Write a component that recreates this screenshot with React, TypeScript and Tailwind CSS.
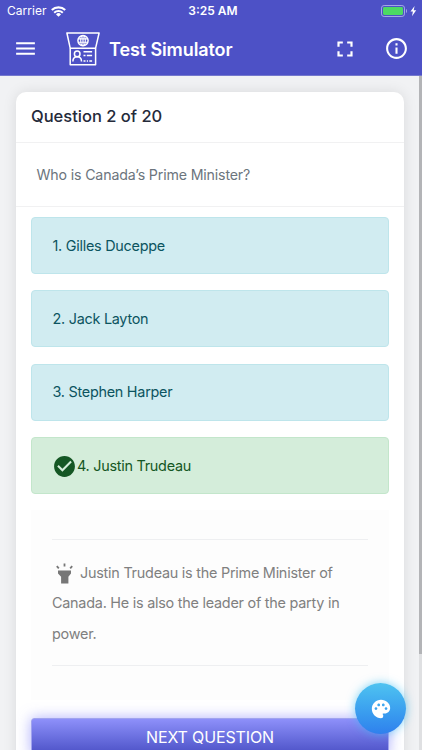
import React from "react"
import clsx from "clsx"
import {
  MdCheckCircle,
  MdFullscreen,
  MdInfoOutline,
  MdMenu,
  MdPalette,
} from "react-icons/md"

interface Answer {
  id: number
  name: string
  correct?: boolean
}

const answers: Answer[] = [
  { id: 1, name: "Gilles Duceppe" },
  { id: 2, name: "Jack Layton" },
  { id: 3, name: "Stephen Harper" },
  { id: 4, name: "Justin Trudeau", correct: true },
]

const WifiIcon = () => (
  <svg className="ml-1 h-[11px] w-[15px]" viewBox="0 0 15 11" fill="none">
    <path d="M.8 4.1a9.5 9.5 0 0 1 13.4 0" stroke="white" strokeWidth="2.1" />
    <path d="M3.2 6.7a6.1 6.1 0 0 1 8.6 0" stroke="white" strokeWidth="2" />
    <path d="M7.5 10.8 5 8.4a3.5 3.5 0 0 1 5 0z" fill="white" />
  </svg>
)

const BatteryIcon = () => (
  <svg className="h-3 w-[37px]" viewBox="0 0 37 12" fill="none">
    <rect x="0.5" y="0.5" width="23" height="11" rx="2.6" stroke="#a3a7e6" />
    <rect x="2" y="2" width="20" height="8" rx="1.4" fill="#4cd964" />
    <path d="M25 4c1.3.4 1.3 3.6 0 4z" fill="#a3a7e6" />
    <path d="M33.6 1 29.5 6.6h2.4l-.9 4.6 4.2-6h-2.5z" fill="white" />
  </svg>
)

const Logo = () => (
  <svg
    className="h-[34px] w-[34px]"
    viewBox="0 0 34 34"
    fill="none"
    stroke="white"
    strokeWidth="1.5"
  >
    <path d="M.9 1h32.2l-3.5 15.2H4.2z" strokeLinejoin="round" />
    <path d="M4.2 16.2v16.6h25.4V16.2" strokeLinejoin="round" />
    <circle cx="17" cy="8.6" r="5.1" />
    <ellipse cx="17" cy="8.6" rx="2.3" ry="5.1" strokeWidth="1.1" />
    <path d="M12.4 6.9h9.2M12.4 10.3h9.2M17 3.5v10.2" strokeWidth="1.1" />
    <circle cx="11.2" cy="21.9" r="2.8" />
    <path d="M6.9 29.6c0-3.2 1.2-4.8 4.3-4.8s4.3 1.6 4.3 4.8" />
    <path d="M17.5 19.8h8.6M17.5 23.4h2M20.8 23.4h5.3M17.5 29h2M20.8 29h1.2M23.3 29h2.8" />
  </svg>
)

const FlashlightIcon = () => (
  <svg
    className="mr-[7px] ml-1 inline-block h-[21px] w-[17px] align-[-6px]"
    viewBox="0 0 17 21"
    fill="#777"
  >
    <path d="M2 7.5h13v3l-2.6 3.2V20.5H5.1v-6.8L2 10.5z" />
    <path
      d="M8.5.5v3M.8 3.2l2 2.2M16.2 3.2l-2 2.2"
      stroke="#777"
      strokeWidth="1.8"
    />
  </svg>
)

const Header = () => (
  <header className="h-[76px] shrink-0 border-b border-[#7478cd] bg-[#4d51c6] text-white">
    <div className="grid h-[22px] grid-cols-3 items-center pr-1 pl-[7px] text-[12px]">
      <div className="flex items-center">
        <span className="tracking-[0.05px]">Carrier</span>
        <WifiIcon />
      </div>
      <span className="pl-px text-center font-semibold">3:25 AM</span>
      <div className="flex justify-end">
        <BatteryIcon />
      </div>
    </div>
    <div className="flex h-[53px] items-center pr-[13px] pl-[13px]">
      <MdMenu className="size-[25px]" />
      <div className="ml-7">
        <Logo />
      </div>
      <h1 className="mt-0.5 ml-[9px] text-[18px] font-semibold tracking-[-0.1px]">
        Test Simulator
      </h1>
      <MdFullscreen className="ml-auto size-[26px]" />
      <MdInfoOutline className="ml-[26px] size-[25px]" />
    </div>
  </header>
)

const AnswerRow = ({ item }: { item: Answer }) => (
  <div
    className={clsx(
      "flex h-[57px] items-center rounded border text-[14.4px] tracking-[-0.26px]",
      item.correct
        ? "border-[#c3e6cb] bg-[#d4edda] pl-5 text-[#155724]"
        : "border-[#bee5eb] bg-[#d1ecf1] pl-[20.5px] text-[#0c5460]"
    )}
  >
    {item.correct && <MdCheckCircle className="mt-0.5 size-[25px]" />}
    <span>
      {item.id}. {item.name}
    </span>
  </div>
)

export default function App() {
  return (
    <div className="relative flex h-[750px] w-[422px] flex-col overflow-hidden bg-[#f1f2f4] font-['Inter',sans-serif]">
      <Header />
      <div className="flex min-h-0 flex-1 justify-between">
        <main className="mt-4 ml-4 h-[700px] w-[388px] shrink-0 rounded-[10px] bg-white shadow-[0_0_14px_rgba(0,0,0,0.10)]">
          <div className="flex h-[51px] items-center border-b border-[#f1f1f2] px-[15px] pb-0.5 text-[16.5px] font-medium text-[#252a3a]">
            Question 2 of 20
          </div>
          <div className="flex h-16 items-center border-b border-[#f1f1f2] px-[20.5px] text-[14.2px] tracking-[-0.16px] text-[#6c757d]">
            Who is Canada’s Prime Minister?
          </div>
          <div className="px-[15px] pt-[10px]">
            <div className="flex flex-col gap-[16.3px]">
              {answers.map((item) => (
                <AnswerRow key={item.id} item={item} />
              ))}
            </div>
            <div className="mt-4 h-[190px] bg-[#fdfdfd] px-[21px] pt-[29px]">
              <p className="border-y border-[#eeeff1] pt-[18px] pb-[15px] text-[14.4px] leading-[30.6px] tracking-[-0.24px] text-[#808080]">
                <FlashlightIcon />
                Justin Trudeau is the Prime Minister of Canada. He is also the
                leader of the party in power.
              </p>
            </div>
            <button className="mt-[18px] block h-[38px] w-full rounded-[3px] border border-[#a0a3ee] bg-linear-to-b from-[#8e90fa] to-[#4b4fc5] text-[16px] tracking-[-0.13px] text-white shadow-[0_0_14px_rgba(110,112,250,0.55)]">
              NEXT QUESTION
            </button>
          </div>
        </main>
        <div className="w-[3px] bg-[#dfe0e2]">
          <div className="h-[578px] bg-[#b3b4b7]" />
        </div>
      </div>
      <button className="absolute top-[683px] left-[355px] flex size-[51px] items-center justify-center rounded-full bg-linear-to-b from-[#4fc3f0] to-[#2f80ed] text-white shadow-[0_0_10px_rgba(60,190,245,0.65)]">
        <MdPalette className="size-[22px]" />
      </button>
    </div>
  )
}
